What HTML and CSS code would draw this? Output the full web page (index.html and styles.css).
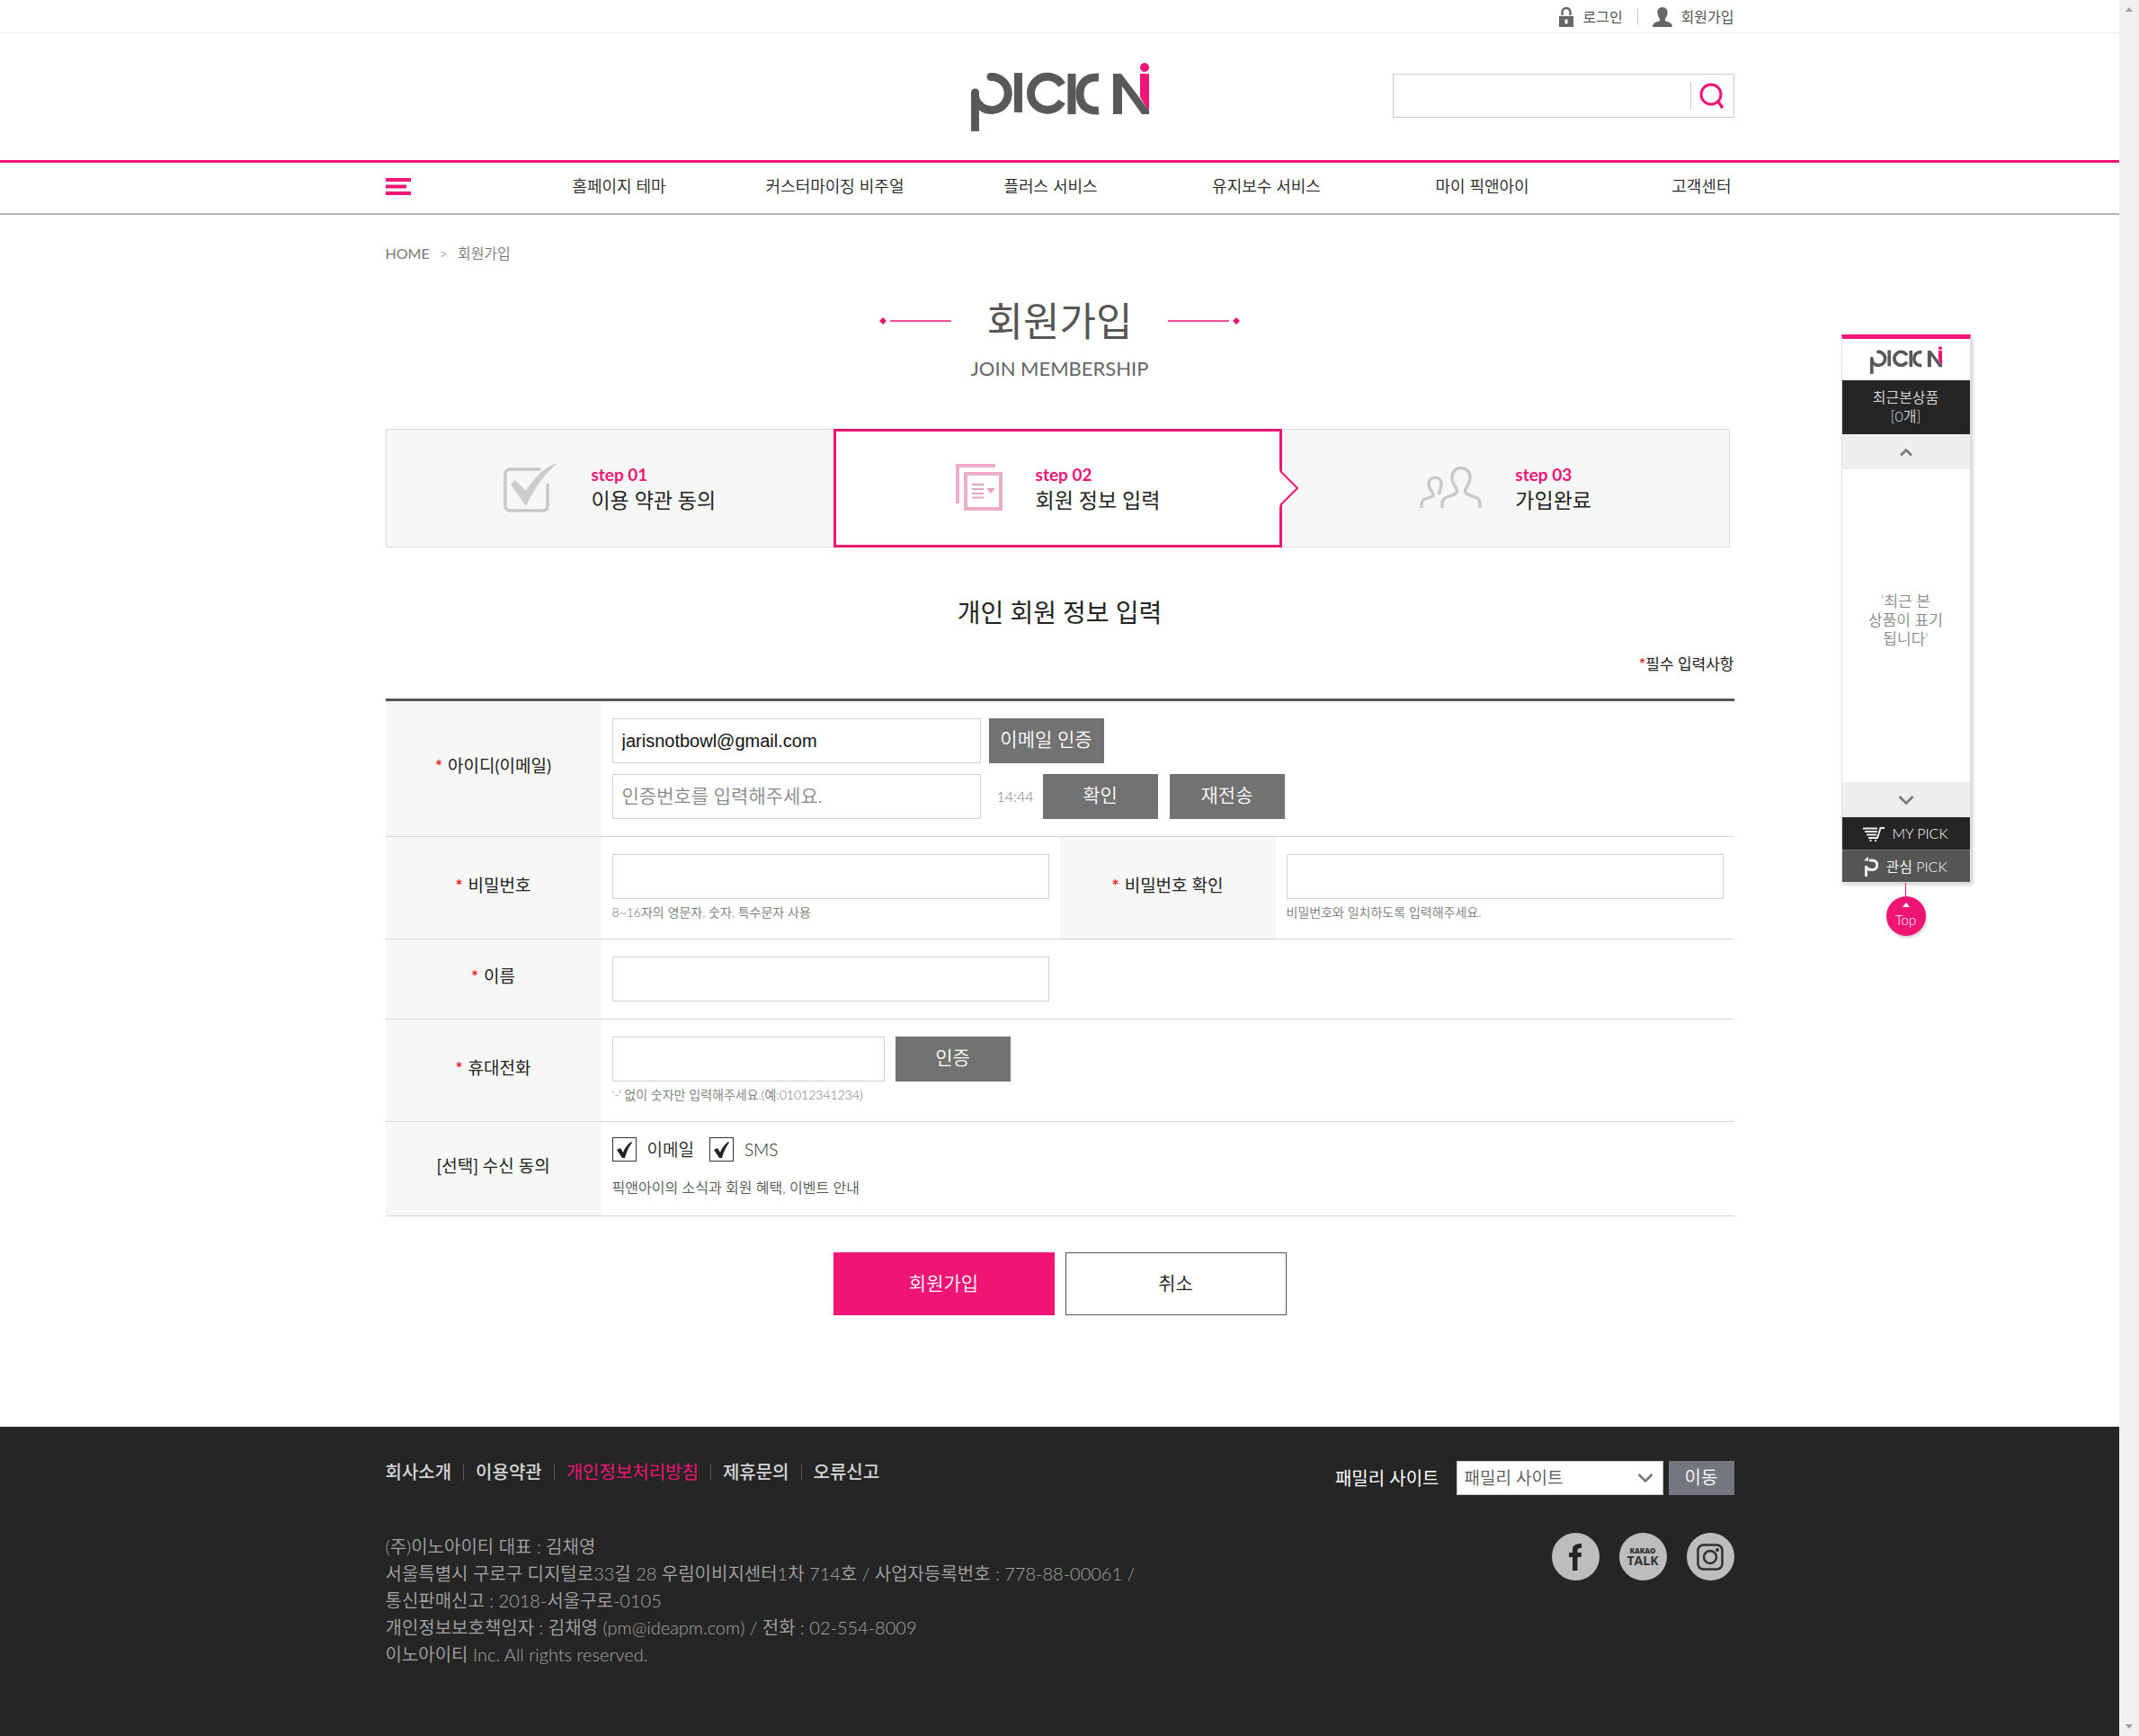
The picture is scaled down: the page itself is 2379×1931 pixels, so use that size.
FILE: index.html
```html
<!DOCTYPE html>
<html lang="ko">
<head>
<meta charset="utf-8">
<meta name="viewport" content="width=device-width, initial-scale=1">
<title>회원가입 - PICKNI</title>
<link rel="stylesheet" href="styles.css">
</head>
<body>
<svg class="sprite" aria-hidden="true">
  <symbol id="logo" viewBox="0 0 198 76">
    <g fill="none" stroke="#58595b" stroke-width="9">
      <path d="M22 15.500A18.500 18.500 0 1 1 4.500 37"/>
      <path d="M4.500 34V76"/>
      <path d="M52.500 11V55"/>
      <path d="M101 24.500A18.500 18.500 0 1 0 101 43"/>
      <path d="M112 12V57"/>
      <path d="M142 16C127 15 121 24 121 34.500S127 54 142 53"/>
    </g>
    <circle cx="22" cy="15.500" r="4.500" fill="#58595b"/>
    <circle cx="4.500" cy="33" r="4.500" fill="#58595b"/>
    <path d="M188 12h10v42l-10-16z" fill="#f01475"/>
    <circle cx="193" cy="5" r="5" fill="#f01475"/>
    <path d="M158 57V12h9l31 41v4h-8l-22-31v31z" fill="#58595b"/>
  </symbol>
</svg>
<div class="window">
<div class="page">
  <div class="topbar">
    <div class="wrap topbar-in">
      <a href="#login"><svg width="16" height="22" viewBox="0 0 16 22"><path d="M3.500 9V5.500a4.500 4.500 0 0 1 9 0V9" fill="none" stroke="#666" stroke-width="2.400"/><path fill="#666" fill-rule="evenodd" d="M0 10h16v12H0zM6.500 13.500v5h3v-5z"/></svg>로그인</a>
      <span class="bar"></span>
      <a href="#join"><svg width="22" height="22" viewBox="0 0 22 22"><path fill="#666" d="M11 0c4 0 6 3 5.600 6.500-.3 3-1.400 5-2.600 6.300v2.400c4 1.300 8 2 8 6.800H0c0-4.800 4-5.500 8-6.800v-2.400C6.800 11.500 5.700 9.500 5.400 6.500 5 3 7 0 11 0z"/></svg>회원가입</a>
    </div>
  </div>
  <header class="header">
    <div class="wrap header-in">
      <a class="brand" href="#home" aria-label="PICKNI"><svg width="198" height="76"><use href="#logo"/></svg></a>
      <form class="search">
        <input type="search" aria-label="검색어">
        <button type="button" aria-label="검색"><svg width="28" height="30" viewBox="0 0 28 30"><circle cx="13" cy="13" r="11" fill="none" stroke="#f01475" stroke-width="3"/><path d="M20 20l6 8" stroke="#f01475" stroke-width="3.400"/></svg></button>
      </form>
    </div>
  </header>
  <nav class="nav">
    <div class="wrap nav-in">
      <button class="burger" type="button" aria-label="전체 메뉴"><svg width="28" height="19" viewBox="0 0 28 19"><path fill="#f01475" d="M0 0h28v4H0zM0 7.500h23v4H0zM0 15h28v4H0z"/></svg></button>
      <a href="#theme">홈페이지 테마</a>
      <a href="#visual">커스터마이징 비주얼</a>
      <a href="#plus">플러스 서비스</a>
      <a href="#care">유지보수 서비스</a>
      <a href="#my">마이 픽앤아이</a>
      <a class="last" href="#help">고객센터</a>
    </div>
  </nav>
  <main class="wrap">
    <div class="crumbs"><a href="#home">HOME</a><span>&gt;</span><span>회원가입</span></div>
    <div class="title">
      <svg width="80" height="8" viewBox="0 0 80 8"><path d="M4 0l4 4-4 4-4-4z" fill="#f01475"/><path d="M12 4h68" stroke="#f01475" stroke-width="1.500"/></svg>
      <h1>회원가입</h1>
      <svg width="80" height="8" viewBox="0 0 80 8"><path d="M76 0l4 4-4 4-4-4z" fill="#f01475"/><path d="M0 4h68" stroke="#f01475" stroke-width="1.500"/></svg>
    </div>
    <p class="subtitle">JOIN MEMBERSHIP</p>
    <ol class="steps">
      <li>
        <svg width="60" height="55" viewBox="0 0 60 55"><path d="M41 7H7a5 5 0 0 0-5 5v36a5 5 0 0 0 5 5h37a5 5 0 0 0 5-5V23" fill="none" stroke="#c8c8c8" stroke-width="3.500"/><path d="M8 24l5-5 12 12C34 16 45 5 60 0 46 12 34 28 25 48z" fill="#ccc"/></svg>
        <div><b>step 01</b><span>이용 약관 동의</span></div>
      </li>
      <li class="on">
        <svg width="52" height="52" viewBox="0 0 52 52"><g fill="none" stroke="#ebaec9" stroke-width="4"><path d="M2 44V2h42"/><path d="M11 11h39v39H11z"/></g><path d="M18 23h13M18 28h13M18 33h13M18 37.500h13" stroke="#e5a3c1" stroke-width="2"/><path d="M34 27h10l-5 6z" fill="#e5a3c1"/></svg>
        <div><b>step 02</b><span>회원 정보 입력</span></div>
        <svg class="arrow" width="22" height="40" viewBox="0 0 22 40"><path d="M0 0l20 20L0 40z" fill="#fff"/><path d="M1 1l19 19L1 39" fill="none" stroke="#f01475" stroke-width="2"/></svg>
      </li>
      <li>
        <svg width="69" height="46" viewBox="0 0 69 46"><g fill="none" stroke="#c9c9c9" stroke-width="3.500"><path d="M2 46v-4c0-7 7-6 12-9 4-3-4-6-4-14 0-9 14-9 14 0 0 5-1 7-3 12"/><path d="M25 46v-5c0-8 9-7 15-11 5-5-4-8-4-18 0-14 20-14 20 0 0 10-9 13-4 18 6 4 15 3 15 11v5"/></g></svg>
        <div><b>step 03</b><span>가입완료</span></div>
      </li>
    </ol>
    <h2>개인 회원 정보 입력</h2>
    <p class="note"><i>*</i>필수 입력사항</p>
    <form>
      <table class="form">
        <colgroup><col class="c-th"><col class="c-td"><col class="c-th"><col class="c-td"></colgroup>
        <tr>
          <th scope="row"><i>*</i><label for="email">아이디(이메일)</label></th>
          <td colspan="3">
            <div class="line"><input class="mid" id="email" type="text" value="jarisnotbowl@gmail.com"><button class="btn" type="button">이메일 인증</button></div>
            <div class="line second"><input class="mid" type="text" aria-label="인증번호" placeholder="인증번호를 입력해주세요."><span class="timer">14:44</span><button class="btn" type="button">확인</button><button class="btn resend" type="button">재전송</button></div>
          </td>
        </tr>
        <tr>
          <th scope="row"><i>*</i><label for="pw">비밀번호</label></th>
          <td><input id="pw" type="password"><p class="hint">8~16자의 영문자, 숫자, 특수문자 사용</p></td>
          <th scope="row"><i>*</i><label for="pw2">비밀번호 확인</label></th>
          <td><input id="pw2" type="password"><p class="hint">비밀번호와 일치하도록 입력해주세요.</p></td>
        </tr>
        <tr>
          <th scope="row"><i>*</i><label for="name">이름</label></th>
          <td colspan="3"><input class="half" id="name" type="text"></td>
        </tr>
        <tr>
          <th scope="row"><i>*</i><label for="tel">휴대전화</label></th>
          <td colspan="3"><div class="line wide"><input class="short" id="tel" type="tel"><button class="btn" type="button">인증</button></div><p class="hint">‘-’ 없이 숫자만 입력해주세요.(예:01012341234)</p></td>
        </tr>
        <tr>
          <th scope="row">[선택] 수신 동의</th>
          <td class="agree" colspan="3">
            <div class="checks">
              <label><span class="box"><input type="checkbox" checked><svg width="18" height="18" viewBox="0 0 18 18"><path d="M1 9l4-2 3 5c2-5 4-8 9-12l1 1c-4 5-6 10-8 17H7z" fill="#222"/></svg></span>이메일</label>
              <label><span class="box"><input type="checkbox" checked><svg width="18" height="18" viewBox="0 0 18 18"><path d="M1 9l4-2 3 5c2-5 4-8 9-12l1 1c-4 5-6 10-8 17H7z" fill="#222"/></svg></span>SMS</label>
            </div>
            <p>픽앤아이의 소식과 회원 혜택, 이벤트 안내</p>
          </td>
        </tr>
      </table>
      <div class="actions"><button class="go" type="button">회원가입</button><button type="button">취소</button></div>
    </form>
  </main>
  <footer class="footer">
    <div class="wrap">
      <div class="foot-top">
        <div class="links"><a href="#about">회사소개</a><a href="#terms">이용약관</a><a class="hot" href="#privacy">개인정보처리방침</a><a href="#partner">제휴문의</a><a href="#report">오류신고</a></div>
        <div class="family">
          <label for="family">패밀리 사이트</label>
          <span class="pick"><select id="family"><option>패밀리 사이트</option></select><svg width="18" height="12" viewBox="0 0 18 12"><path d="M1.500 2L9 9.500 16.500 2" fill="none" stroke="#777" stroke-width="2.600"/></svg></span>
          <button type="button">이동</button>
        </div>
      </div>
      <div class="foot-main">
        <address>(주)이노아이티 대표 : 김채영<br>서울특별시 구로구 디지털로33길 28 우림이비지센터1차 714호 / 사업자등록번호 : 778-88-00061 /<br>통신판매신고 : 2018-서울구로-0105<br>개인정보보호책임자 : 김채영 (pm@ideapm.com) / 전화 : 02-554-8009<br>이노아이티 Inc. All rights reserved.</address>
        <div class="social">
          <a href="#facebook" aria-label="Facebook"><svg width="14" height="30" viewBox="0 0 14 30"><path d="M4 30V15H0v-5h4V7c0-5 3-7 10-7v5c-3 0-4.500.5-4.500 2.500V10H14l-.5 5h-4v15z" fill="#252525"/></svg></a>
          <a class="kakao" href="#kakao"><small>KAKAO</small>TALK</a>
          <a href="#instagram" aria-label="Instagram"><svg width="30" height="30" viewBox="0 0 30 30"><g fill="none" stroke="#303030" stroke-width="2.500"><rect x="1.500" y="1.500" width="27" height="27" rx="6"/><circle cx="15" cy="15" r="7"/></g><circle cx="23" cy="7" r="2" fill="#303030"/></svg></a>
        </div>
      </div>
    </div>
  </footer>
  <aside class="quick">
    <div class="quick-box">
      <div class="quick-logo"><svg width="80" height="31"><use href="#logo"/></svg></div>
      <div class="quick-head">최근본상품<br>[0개]</div>
      <button class="quick-arrow" type="button" aria-label="이전"><svg width="14" height="10" viewBox="0 0 14 10"><path d="M1 8.500L7 2.500l6 6" fill="none" stroke="#777" stroke-width="2.600"/></svg></button>
      <p class="quick-list">'최근 본<br>상품이 표기<br>됩니다'</p>
      <button class="quick-arrow" type="button" aria-label="다음"><svg width="18" height="12" viewBox="0 0 18 12"><path d="M1.500 2L9 9.500 16.500 2" fill="none" stroke="#777" stroke-width="2.600"/></svg></button>
      <a class="quick-link" href="#mypick"><svg width="24" height="18" viewBox="0 0 24 18"><path d="M0 3.500h16M2 7h14M4 10.500h11M6 14h10l3.500-11H24" fill="none" stroke="#eee" stroke-width="2"/><circle cx="8.500" cy="17" r="1.200" fill="#eee"/><circle cx="14" cy="17" r="1.200" fill="#eee"/></svg>MY PICK</a>
      <a class="quick-link wish" href="#wish"><svg width="16" height="22" viewBox="0 0 16 22"><path d="M6 4h3.500a5 5 0 0 1 0 10.500C5 14.500 2.500 13 2.500 10M2.500 10v12" fill="none" stroke="#f3f3f3" stroke-width="3"/><path d="M0 4l5-4v5z" fill="#f3f3f3"/></svg>관심 PICK</a>
    </div>
    <span class="stem"></span>
    <a class="top" href="#"><svg width="8" height="5" viewBox="0 0 8 5"><path d="M4 0l4 5H0z" fill="#fff"/></svg>Top</a>
  </aside>
</div>
<div class="scroll" aria-hidden="true"><svg width="8" height="5" viewBox="0 0 8 5"><path d="M4 0l4 5H0z" fill="#a0a0a0"/></svg><svg width="8" height="5" viewBox="0 0 8 5"><path d="M4 5l4-5H0z" fill="#a0a0a0"/></svg></div>
</div>
</body>
</html>
```
FILE: styles.css
```css
* { box-sizing: border-box; }
body { margin: 0; background: #fff; color: #222; font: 350 18px/24px Lato, "Noto Sans CJK KR", sans-serif; }
h1, h2, p, ol { margin: 0; padding: 0; }
a { color: inherit; text-decoration: none; }
i { font-style: normal; font-weight: 700; color: #e22; }
svg { display: block; flex: none; }
button, input, select { font: inherit; border-radius: 0; }
button { padding: 0; border: 0; background: none; }
.sprite { position: absolute; width: 0; height: 0; }
.window { display: grid; grid-template-columns: 1fr 22px; min-height: 100vh; }
.page { position: relative; display: flex; flex-direction: column; min-width: 0; }
.wrap { width: 100%; max-width: 1500px; margin: 0 auto; }
.scroll { position: sticky; top: 0; height: 100vh; padding: 8px 0; background: #f0f0f0; display: flex; flex-direction: column; justify-content: space-between; align-items: center; }

.topbar { border-bottom: 1px solid #ececec; }
.topbar-in { height: 36px; padding-top: 2px; display: flex; justify-content: flex-end; align-items: center; font-size: 16px; color: #444; }
.topbar-in a { display: flex; align-items: center; gap: 10px; }
.bar { width: 1px; height: 18px; margin: 0 16px; background: #ccc; }
.header-in { display: grid; grid-template-columns: 1fr auto 1fr; height: 141px; align-items: center; }
.brand { grid-column: 2; }
.search { justify-self: end; width: 380px; height: 49px; margin-bottom: 2px; border: 1px solid #ccc; display: flex; align-items: center; }
.search input { flex: 1; min-width: 0; height: 46px; padding: 0 10px; border: 0; outline: 0; background: none; }
.search button { width: 48px; height: 31px; border-left: 1px solid #ccc; display: grid; place-items: center; }
.nav { border-top: 3px solid #f01475; border-bottom: 2px solid #b4b4b4; color: #222; }
.nav-in { height: 56px; padding-bottom: 4px; display: grid; grid-template-columns: 14fr repeat(5, 24fr) 16fr; align-items: center; text-align: center; }
.nav .last { padding-right: 3px; text-align: right; }

.crumbs { display: flex; gap: 11px; margin-top: 33px; font-size: 16px; line-height: 20px; color: #777; }
.crumbs a { font-weight: 400; }
.title { display: flex; justify-content: center; align-items: center; gap: 40px; margin-top: 35px; }
h1 { font-size: 44px; line-height: 60px; font-weight: 400; color: #555; }
.subtitle { margin-top: 10px; font-size: 22px; line-height: 26px; font-weight: 400; text-align: center; color: #666; }

.steps { display: grid; grid-template-columns: repeat(3, 1fr); margin: 54px 4px 0 0; list-style: none; }
.steps li { position: relative; height: 132px; padding-bottom: 2px; display: flex; align-items: center; justify-content: center; gap: 37px; border: 1px solid #dcdcdc; background: #f7f7f7; }
.steps .on { border: 3px solid #f01475; background: #fff; }
.steps li:first-child { border-right: 0; }
.steps li:last-child { border-left: 0; }
.steps b, .steps span { display: block; line-height: 28px; }
.steps b { font-size: 19px; font-weight: 700; color: #f01475; }
.steps span { font-size: 23px; font-weight: 400; }
.steps .arrow { position: absolute; left: 100%; top: 43px; z-index: 1; }
h2 { margin-top: 52px; font-size: 28px; line-height: 40px; font-weight: 400; text-align: center; }
.note { margin-top: 26px; font-size: 17px; font-weight: 400; text-align: right; }

.form { width: 100%; margin-top: 26px; table-layout: fixed; border-collapse: separate; border-spacing: 0; border-top: 3px solid #58585a; }
.c-th { width: 16%; }
.c-td { width: 34%; }
.form th, .form td { padding: 19px 12px; border-bottom: 1px solid #d5d5d5; text-align: left; }
.form th { padding: 16px 12px 22px; background: #f7f7f7; font-size: 19px; font-weight: 400; text-align: center; }
.form th i { margin-right: 6px; }
.form input:not([type=checkbox]) { display: block; width: 100%; height: 50px; padding: 0 10px; border: 1px solid #d2d2d2; background: #fff; color: #111; font: 20px "Liberation Sans", "Noto Sans CJK KR", sans-serif; }
.form input::placeholder { font: 350 21px Lato, "Noto Sans CJK KR", sans-serif; color: #888; opacity: 1; }
.form input.mid { width: 410px; }
.form input.short { width: 303px; }
.form input.half { width: 486px; }
.line { display: flex; align-items: center; gap: 9px; }
.line.wide { gap: 12px; }
.second { margin-top: 12px; }
.btn { width: 128px; height: 50px; padding-bottom: 4px; background: #727272; color: #fff; font-size: 21px; }
.resend { margin-left: 4px; }
.timer { width: 51px; padding-left: 9px; font-size: 16px; color: #777; }
.hint { padding-top: 4px; font-size: 14px; line-height: 21px; color: #777; }
.form .agree { padding: 17px 12px; }
.agree p { margin-top: 15px; font-size: 16px; line-height: 28px; color: #555; }
.checks, .checks label { display: flex; align-items: center; }
.checks { gap: 17px; font-size: 19px; line-height: 27px; color: #222; }
.checks label { gap: 12px; }
.box { display: grid; place-items: center; }
.box > * { grid-area: 1 / 1; }
.box input { appearance: none; width: 27px; height: 27px; margin: 0; border: 1px solid #333; background: #fff; }
.box svg { z-index: 1; pointer-events: none; }

.actions { display: flex; justify-content: center; gap: 12px; padding: 40px 0 124px; }
.actions button { width: 246px; height: 70px; padding-bottom: 3px; border: 1px solid #555; background: #fff; color: #222; font-size: 21px; }
.actions .go { border-color: #f01475; background: #f01475; color: #fff; }

.footer { flex: 1; padding: 38px 0 75px; background: #252525; color: #a5a5a5; }
.foot-top, .foot-main { display: flex; justify-content: space-between; align-items: flex-start; }
.links { display: flex; align-items: center; font-size: 20px; font-weight: 500; color: #d5d5d5; }
.links a + a { display: flex; align-items: center; }
.links a + a::before { content: ""; width: 1px; height: 19px; margin: 0 13px; background: #555; }
.links a.hot { font-weight: 400; color: #f01475; }
.family { display: flex; align-items: center; font-size: 20px; color: #fff; }
.family label { font-weight: 400; }
.pick { position: relative; margin: 0 6px 0 19px; }
.pick select { appearance: none; display: block; width: 230px; height: 38px; padding: 0 8px; border: 1px solid #ccc; background: #fff; color: #555; font-size: 19px; }
.pick svg { position: absolute; right: 11px; top: 13px; pointer-events: none; }
.family button { width: 73px; height: 38px; padding-bottom: 3px; background: #74777f; color: #fff; }
.foot-main { margin-top: 42px; }
address { font-size: 20px; line-height: 30px; font-style: normal; }
.social { display: flex; gap: 22px; }
.social a { width: 53px; height: 53px; border-radius: 50%; background: #bdbdbd; display: flex; flex-direction: column; align-items: center; justify-content: center; }
.social .kakao { font: 700 14px/13px "Open Sans", sans-serif; color: #303030; }
.kakao small { font-size: 8px; line-height: 8px; font-weight: 800; }

.quick { position: absolute; left: calc(50% + 869px); top: 372px; width: 144px; display: flex; flex-direction: column; align-items: center; }
.quick-box { width: 100%; border: 1px solid #e3e3e3; border-top: 5px solid #f01475; background: #fff; box-shadow: 2px 2px 4px rgba(0, 0, 0, .2); }
.quick-logo { height: 46px; display: grid; place-items: center; }
.quick-head { height: 60px; padding-top: 8px; background: #252525; color: #ddd; font-size: 16px; line-height: 21px; text-align: center; }
.quick-arrow { width: 100%; height: 39px; background: #eee; display: grid; place-items: center; }
.quick-list { height: 348px; padding-bottom: 14px; display: grid; place-content: center; font-size: 17px; line-height: 21px; text-align: center; color: #888; }
.quick-link { height: 36px; background: #252525; color: #fff; font-size: 16px; display: flex; align-items: center; justify-content: center; gap: 8px; }
.quick-link.wish { background: #555; border-top: 1px solid #777; }
.stem { width: 1px; height: 15px; background: #f01475; }
.top { width: 44px; height: 44px; padding-bottom: 2px; border-radius: 50%; background: #f01475; color: #fff; font-size: 15px; line-height: 18px; display: flex; flex-direction: column; align-items: center; justify-content: center; gap: 5px; box-shadow: 1px 2px 3px rgba(0, 0, 0, .2); }
```
